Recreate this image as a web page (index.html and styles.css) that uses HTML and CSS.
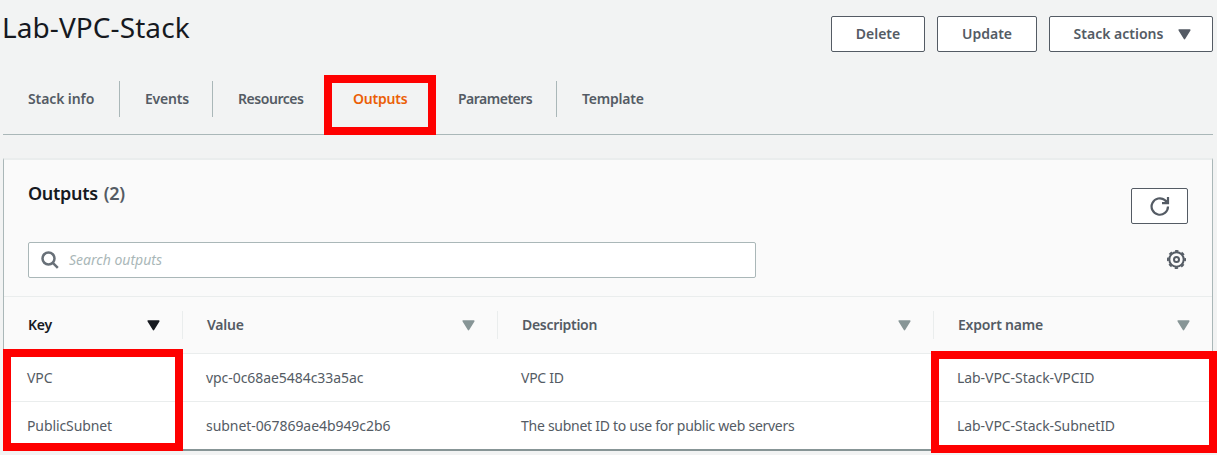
FILE: index.html
```html
<!DOCTYPE html>
<html lang="en">
<head>
<meta charset="utf-8">
<title>Lab-VPC-Stack</title>
<link rel="stylesheet" href="styles.css">
</head>
<body>
<main class="page">
  <header class="page-header">
    <h1 class="title">Lab-VPC-Stack</h1>
    <div class="actions">
      <button class="button delete">Delete</button>
      <button class="button update">Update</button>
      <button class="button stack-actions">Stack actions
        <svg class="arrow" viewBox="0 0 13 11"><path d="M1.2 1h10.6L6.5 9.7z"/></svg>
      </button>
    </div>
  </header>
  <nav class="tabs">
    <a class="tab tab-info">Stack info</a>
    <a class="tab tab-events">Events</a>
    <a class="tab tab-resources">Resources</a>
    <a class="tab tab-outputs active">Outputs</a>
    <a class="tab tab-parameters">Parameters</a>
    <a class="tab tab-template">Template</a>
  </nav>
  <section class="panel">
    <div class="panel-top">
      <div class="panel-heading">
        <h2 class="panel-title">Outputs <span class="counter">(2)</span></h2>
        <button class="button refresh" aria-label="Refresh">
          <svg class="refresh-icon" viewBox="0 0 20 20"><path d="M18 10.5A8.200 8.200 0 1 1 15 4.200L17 6.200"/><path d="M18 1v6.200H12"/><path class="solid" d="M18.500 2v5.500H13z"/></svg>
        </button>
      </div>
      <div class="filter-row">
        <div class="search">
          <svg class="search-icon" viewBox="0 0 18 18"><circle cx="7.5" cy="7.5" r="6"/><path d="M11.8 11.8l5 5"/></svg>
          <span class="placeholder">Search outputs</span>
        </div>
        <svg class="gear" viewBox="0 0 20 20"><circle cx="9.5" cy="9.5" r="7.200"/><circle class="teeth" cx="9.5" cy="9.5" r="8.600"/><circle cx="9.5" cy="9.5" r="2.500"/></svg>
      </div>
    </div>
    <div class="grid head">
      <div class="th sorted"><span class="label">Key</span><svg class="arrow" viewBox="0 0 13 11"><path d="M1.2 1h10.6L6.5 9.7z"/></svg></div>
      <div class="th"><span class="label">Value</span><svg class="arrow" viewBox="0 0 13 11"><path d="M1.2 1h10.6L6.5 9.7z"/></svg></div>
      <div class="th"><span class="label description-label">Description</span><svg class="arrow" viewBox="0 0 13 11"><path d="M1.2 1h10.6L6.5 9.7z"/></svg></div>
      <div class="th"><span class="label">Export name</span><svg class="arrow" viewBox="0 0 13 11"><path d="M1.2 1h10.6L6.5 9.7z"/></svg></div>
    </div>
    <div class="grid row">
      <span class="td key">VPC</span>
      <span class="td value">vpc-0c68ae5484c33a5ac</span>
      <span class="td description">VPC ID</span>
      <span class="td export">Lab-VPC-Stack-VPCID</span>
    </div>
    <div class="grid row">
      <span class="td key">PublicSubnet</span>
      <span class="td value">subnet-067869ae4b949c2b6</span>
      <span class="td description">The subnet ID to use for public web servers</span>
      <span class="td export">Lab-VPC-Stack-SubnetID</span>
    </div>
  </section>
  <div class="highlight highlight-tab"></div>
  <div class="highlight highlight-keys"></div>
  <div class="highlight highlight-exports"></div>
</main>
</body>
</html>
```
FILE: styles.css
```css
* { box-sizing: border-box; }
body {
  margin: 0;
  background: #f2f3f3;
  color: #545b64;
  font: 14px/22px "Noto Sans", sans-serif;
}
.page { position: relative; height: 455px; padding: 0 4px 0 3px; overflow: hidden; }
.page-header { display: flex; justify-content: space-between; height: 81px; }
.title { margin: 9px 0 0 -1px; font-size: 28px; line-height: 36px; font-weight: 400; color: #16191f; letter-spacing: 0.08px; }
.actions { display: flex; gap: 12px; padding-top: 16px; }
.button {
  display: flex;
  align-items: center;
  justify-content: center;
  height: 36px;
  padding: 0;
  border: 1px solid #545b64;
  border-radius: 2px;
  background: #fff;
  color: #545b64;
  font: 600 14px/22px "Noto Sans", sans-serif;
}
.delete { width: 94px; }
.update { width: 100px; }
.stack-actions { width: 164px; gap: 15px; padding-left: 3px; }
.arrow { width: 13px; height: 11px; fill: currentColor; stroke: currentColor; stroke-width: 1.5; stroke-linejoin: round; }
.tabs { display: flex; height: 54px; border-bottom: 1px solid #aab7b8; }
.tab { height: 36px; padding-left: 25px; line-height: 36px; font-weight: 600; letter-spacing: -0.2px; white-space: nowrap; border-right: 1px solid #aab7b8; }
.tab-info { width: 117px; letter-spacing: -0.1px; }
.tab-events { width: 93px; }
.tab-resources { width: 116px; letter-spacing: -0.45px; }
.tab-outputs { width: 104px; padding-left: 24px; }
.tab-parameters { width: 124px; letter-spacing: -0.5px; }
.tab-template { border-right: 0; }
.active { color: #eb5f07; }
.panel {
  height: 293px;
  margin-top: 23px;
  border: 1px solid #aab7b8;
  border-top: 2px solid #eaeded;
  border-bottom: 2px solid #879596;
  background: #fff;
}
.panel-top { height: 137px; padding: 0 24px; background: #fafafa; border-bottom: 1px solid #eaeded; }
.panel-heading { display: flex; justify-content: space-between; height: 82px; }
.panel-title { margin: 22px 0 0; font-size: 18px; line-height: 22px; font-weight: 600; letter-spacing: -0.3px; word-spacing: 1.5px; color: #16191f; }
.counter { color: #545b64; }
.refresh { width: 57px; margin-top: 28px; }
.refresh-icon { width: 20px; height: 20px; fill: none; stroke: #545b64; stroke-width: 2.2; }
.refresh-icon .solid { fill: #545b64; stroke: none; }
.filter-row { display: flex; justify-content: space-between; align-items: center; height: 36px; }
.search { display: flex; align-items: center; gap: 10px; width: 728px; height: 36px; padding-left: 12px; border: 1px solid #aab7b8; border-radius: 2px; background: #fff; }
.search-icon { width: 18px; height: 18px; fill: none; stroke: #687078; stroke-width: 2.5; }
.placeholder { color: #aab7b8; font-style: italic; }
.gear { width: 20px; height: 20px; margin-right: 1px; fill: none; stroke: #545b64; stroke-width: 2; }
.gear .teeth { stroke-width: 1.8; stroke-dasharray: 3.4 3.354; stroke-dashoffset: 1.7; }
.grid { display: grid; grid-template-columns: 179px 315px 436px 1fr; }
.head { height: 57px; padding-top: 14px; background: #fafafa; border-bottom: 1px solid #eaeded; }
.th { display: flex; align-items: center; justify-content: space-between; height: 28px; padding: 0 22px 0 24px; border-right: 1px solid #eaeded; color: #879596; font-weight: 600; letter-spacing: -0.2px; }
.th:last-child { border-right: 0; }
.label { color: #545b64; }
.description-label { letter-spacing: -0.3px; }
.sorted, .sorted .label { color: #16191f; }
.row { height: 48px; align-items: center; border-bottom: 1px solid #eaeded; }
.row:last-child { border-bottom: 0; }
.td { padding-left: 23px; white-space: nowrap; }
.key { letter-spacing: -0.1px; }
.value, .export { letter-spacing: -0.06px; }
.description { letter-spacing: -0.27px; }
.highlight { position: absolute; border: 8px solid #fe0000; }
.highlight-tab { left: 324px; top: 75px; width: 112px; height: 60px; }
.highlight-keys { left: 3px; top: 349px; width: 180px; height: 102px; }
.highlight-exports { left: 931px; top: 351px; width: 286px; height: 102px; }
```
